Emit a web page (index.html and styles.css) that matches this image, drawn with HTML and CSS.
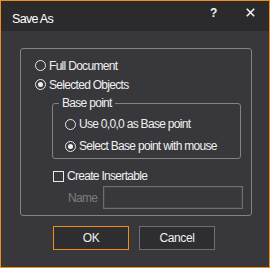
FILE: index.html
```html
<!DOCTYPE html>
<html>
<head>
<meta charset="utf-8">
<link rel="stylesheet" href="styles.css">
</head>
<body>
<div class="dialog">
  <div class="titlebar">
    <span class="title">Save As</span>
    <span class="help">?</span>
    <span class="close"><svg width="9" height="9" viewBox="0 0 9 9"><path d="M0.8 0.8 L8.2 8.2 M8.2 0.8 L0.8 8.2" stroke="#f2f2f2" stroke-width="1.6" fill="none"/></svg></span>
  </div>
  <div class="content">
    <div class="group outer">
      <div class="opt"><span class="radio"></span><span class="lbl">Full Document</span></div>
      <div class="opt"><span class="radio on"></span><span class="lbl">Selected Objects</span></div>
      <div class="group inner">
        <span class="legend">Base point</span>
        <div class="opt tall"><span class="radio"></span><span class="lbl">Use 0,0,0 as Base point</span></div>
        <div class="opt tall"><span class="radio on"></span><span class="lbl">Select Base point with mouse</span></div>
      </div>
      <div class="opt check"><span class="checkbox"></span><span class="lbl">Create Insertable</span></div>
      <div class="namerow"><span class="namelabel">Name</span><span class="input"></span></div>
    </div>
    <div class="buttons">
      <button class="btn primary">OK</button>
      <button class="btn">Cancel</button>
    </div>
  </div>
</div>
</body>
</html>
```
FILE: styles.css
```css
html, body {
  margin: 0;
  padding: 0;
  background: #38383c;
}
.dialog {
  width: 270px;
  height: 268px;
  box-sizing: border-box;
  border: 1px solid #f28c1a;
  background: #38383c;
  font-family: "Liberation Sans", Arial, sans-serif;
  font-size: 12px;
  letter-spacing: -0.7px;
  color: #f0f0f0;
  overflow: hidden;
}
.titlebar {
  height: 30px;
  background: #2b2b2e;
  display: flex;
  align-items: flex-start;
}
.title {
  flex: 1;
  padding: 11px 0 0 11px;
  line-height: 14px;
  font-size: 12.5px;
  color: #ffffff;
}
.help {
  margin: 5px 0 0 0;
  width: 10px;
  font-weight: bold;
  font-size: 12px;
  line-height: 14px;
  color: #f2f2f2;
  letter-spacing: 0;
}
.close {
  margin: 7px 14px 0 26px;
  width: 9px;
  height: 9px;
  display: flex;
}
.content {
  padding: 17px 0 0 19px;
}
.group {
  border: 1px solid #828282;
  border-radius: 3px;
  box-sizing: border-box;
  position: relative;
}
.outer {
  width: 232px;
  height: 168px;
  padding: 7px 0 0 14px;
}
.opt {
  height: 19px;
  display: flex;
  align-items: center;
}
.opt.tall {
  height: 22px;
}
.radio {
  width: 11px;
  height: 11px;
  box-sizing: border-box;
  border: 1px solid #e8e8e8;
  border-radius: 50%;
  margin-right: 3px;
  display: flex;
  align-items: center;
  justify-content: center;
  flex: none;
}
.radio.on::after {
  content: "";
  width: 5px;
  height: 5px;
  border-radius: 50%;
  background: #f0f0f0;
}
.inner {
  width: 189px;
  height: 56px;
  margin: 9px 0 0 17px;
  padding: 9px 0 0 12px;
}
.legend {
  position: absolute;
  top: -8px;
  left: 6px;
  padding: 0 3px;
  background: #38383c;
  line-height: 14px;
}
.check {
  height: 20px;
  margin: 7px 0 0 18px;
}
.checkbox {
  width: 11px;
  height: 11px;
  box-sizing: border-box;
  border: 1px solid #e8e8e8;
  margin-right: 3px;
  flex: none;
}
.namerow {
  display: flex;
  align-items: center;
  height: 23px;
  margin-left: 33px;
}
.namelabel {
  color: #7c7c7c;
  width: 35px;
}
.input {
  width: 140px;
  height: 23px;
  box-sizing: border-box;
  border: 1px solid #6e6e6e;
  box-shadow: inset 0 0 0 1px #444448;
  background: #38383c;
}
.buttons {
  display: flex;
  gap: 10px;
  margin: 10px 0 0 33px;
}
.btn {
  width: 76px;
  height: 24px;
  box-sizing: border-box;
  border: 1px solid #6e6e6e;
  background: #2e2e31;
  color: #f0f0f0;
  font-family: "Liberation Sans", Arial, sans-serif;
  font-size: 12px;
  letter-spacing: -0.4px;
  padding: 0;
}
.btn.primary {
  border-color: #f28c1a;
}
```
